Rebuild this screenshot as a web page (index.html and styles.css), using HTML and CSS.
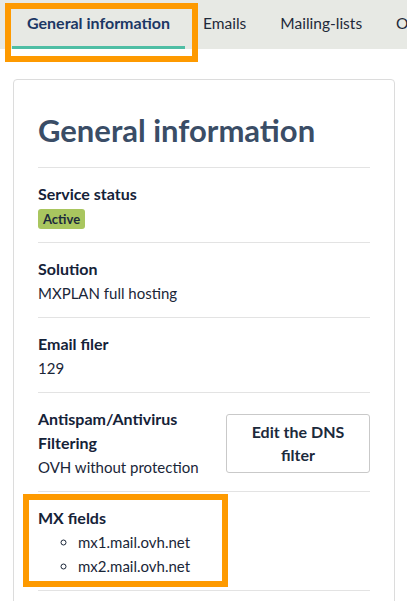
FILE: index.html
```html
<!DOCTYPE html>
<html lang="en">
<head>
<meta charset="utf-8">
<title>General information</title>
<link rel="stylesheet" href="styles.css">
</head>
<body>
<nav class="tabs">
  <div class="tab tab-active">General information</div>
  <div class="tab">Emails</div>
  <div class="tab">Mailing-lists</div>
  <div class="tab">Operations</div>
  <span class="highlight highlight-tab"></span>
</nav>
<main class="page">
  <section class="card">
    <h1 class="card-title">General information</h1>
    <div class="field">
      <div class="field-label">Service status</div>
      <span class="badge">Active</span>
    </div>
    <div class="field">
      <div class="field-label">Solution</div>
      <div class="field-value">MXPLAN full hosting</div>
    </div>
    <div class="field">
      <div class="field-label">Email filer</div>
      <div class="field-value">129</div>
    </div>
    <div class="field field-row">
      <div class="field-main">
        <div class="field-label">Antispam/Antivirus Filtering</div>
        <div class="field-value">OVH without protection</div>
      </div>
      <button class="btn">Edit the DNS filter</button>
    </div>
    <div class="field field-mx">
      <div class="field-label">MX fields</div>
      <ul class="mx-list">
        <li>mx1.mail.ovh.net</li>
        <li>mx2.mail.ovh.net</li>
      </ul>
      <span class="highlight highlight-mx"></span>
    </div>
    <div class="field field-end"></div>
  </section>
</main>
</body>
</html>
```
FILE: styles.css
```css
html, body {
  margin: 0;
  padding: 0;
  background: #ffffff;
  font-family: "Lato", "Open Sans", sans-serif;
  color: #1a2638;
  overflow: hidden;
}

.tabs {
  position: relative;
  display: flex;
  gap: 2px;
  height: 49px;
  padding-left: 12px;
  background: #e7e9e4;
  white-space: nowrap;
}

.tab {
  flex: none;
  padding: 0 16px;
  font-size: 15.5px;
  line-height: 46px;
  color: #1f2a3a;
  border-bottom: 3px solid transparent;
}

.tab-active {
  padding: 0 15px;
  font-size: 16px;
  font-weight: 700;
  color: #1c3764;
  border-bottom-color: #4fbea4;
}

.highlight {
  position: absolute;
  border: 6px solid #fe9a00;
  pointer-events: none;
}

.highlight-tab {
  left: 5px;
  top: 3px;
  width: 181px;
  height: 47px;
}

.page {
  padding: 30px 12px 0 13px;
}

.card {
  border: 1px solid #dcdcdc;
  border-radius: 4px;
  padding: 24px 24px 0;
}

.card-title {
  margin: 4px 0 15px;
  font-size: 31px;
  line-height: 44px;
  font-weight: 700;
  color: #3a4d66;
}

.field {
  position: relative;
  border-top: 1px solid #e3e3e3;
  padding: 14px 0 12px;
  font-size: 15px;
  line-height: 24px;
}

.field-label {
  font-size: 16px;
  font-weight: 700;
  color: #152238;
}

.field-value {
  color: #1a2638;
}

.badge {
  display: inline-block;
  margin-top: 3px;
  padding: 0 5px;
  height: 20px;
  line-height: 20px;
  font-size: 13px;
  font-weight: 700;
  color: #1c2a3c;
  background: #a9c65f;
  border-radius: 3px;
}

.field-row {
  display: flex;
  align-items: center;
  justify-content: space-between;
  gap: 12px;
}

.field-main {
  width: 170px;
}

.btn {
  flex: none;
  width: 144px;
  height: 59px;
  padding: 4px 14px;
  background: #ffffff;
  border: 1px solid #c9c9c9;
  border-radius: 3px;
  font-family: inherit;
  font-size: 16px;
  line-height: 23px;
  font-weight: 700;
  color: #1c2a3c;
}

.mx-list {
  margin: 0;
  padding-left: 40px;
  list-style: circle;
}

.highlight-mx {
  left: -15px;
  top: 2px;
  width: 193px;
  height: 81px;
}

.field-end {
  padding: 0;
  height: 20px;
}
```
